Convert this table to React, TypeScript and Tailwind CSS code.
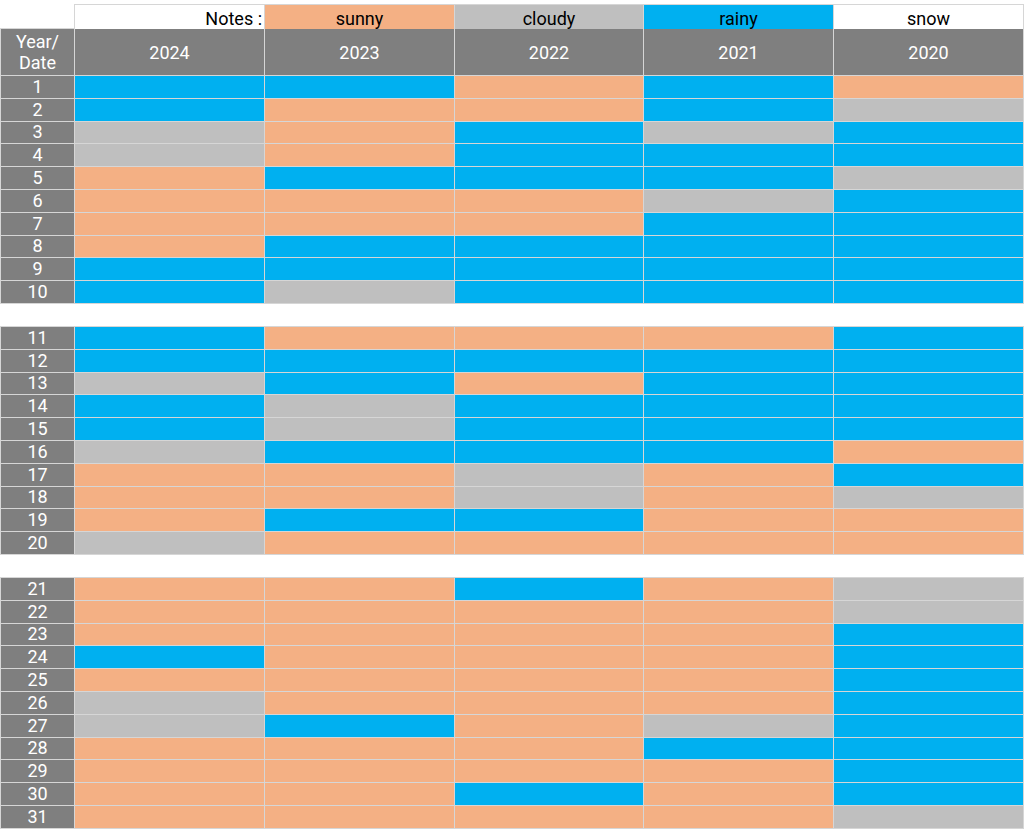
import React from 'react'

type W = 'S' | 'C' | 'R'

const bg: Record<W, string> = {
  S: 'bg-[#f4b084]',
  C: 'bg-[#bfbfbf]',
  R: 'bg-[#00b0f0]',
}

const years = ['2024', '2023', '2022', '2021', '2020']

// one string per day: 2024, 2023, 2022, 2021, 2020
const days: string[] = [
  'RRSRS', 'RSSRC', 'CSRCR', 'CSRRR', 'SRRRC',
  'SSSCR', 'SSSRR', 'SRRRR', 'RRRRR', 'RCRRR',
  'RSSSR', 'RRRRR', 'CRSRR', 'RCRRR', 'RCRRR',
  'CRRRS', 'SSCSR', 'SSCSC', 'SRRSS', 'CSSSS',
  'SSRSC', 'SSSSC', 'SSSSR', 'RSSSR', 'SSSSR',
  'CSSSR', 'CRSCR', 'SSSRR', 'SSSSR', 'SSRSR', 'SSSSC',
]

const cols = 'grid-cols-[73px_189px_189px_188px_189px_189px]'

function DayRow({ day }: { day: number }) {
  const row = days[day - 1].split('') as W[]
  return (
    <>
      <div className="bg-[#7f7f7f] text-white text-[18px] leading-none flex items-center justify-center">
        {day}
      </div>
      {row.map((w, i) => (
        <div key={i} className={bg[w]} />
      ))}
    </>
  )
}

function Section({ from, to, header }: { from: number; to: number; header?: boolean }) {
  const list = []
  for (let d = from; d <= to; d++) list.push(d)
  return (
    <div
      className={`grid ${cols} ${header ? 'grid-rows-[46px]' : ''} auto-rows-[21.8px] gap-px bg-[#d6d6d6] p-px`}
    >
      {header && (
        <>
          <div className="bg-[#7f7f7f] text-white text-[18px] leading-[21px] flex flex-col items-center justify-center">
            <span>Year/</span>
            <span>Date</span>
          </div>
          {years.map(y => (
            <div key={y} className="bg-[#7f7f7f] text-white text-[18px] flex items-center justify-center">
              {y}
            </div>
          ))}
        </>
      )}
      {list.map(d => (
        <DayRow key={d} day={d} />
      ))}
    </div>
  )
}

export default function App() {
  return (
    <div className="w-[1024px] h-[838px] bg-white pt-[4px] font-['Roboto',sans-serif] overflow-hidden">
      {/* Notes / legend */}
      <div className="ml-[74px] grid grid-cols-[189px_189px_188px_189px_189px] h-[24px] gap-px bg-[#d6d6d6] px-px pt-px text-[18px] text-black">
        <div className="bg-white flex items-center justify-end pr-[2px]">Notes :</div>
        <div className="bg-[#f4b084] flex items-center justify-center">sunny</div>
        <div className="bg-[#bfbfbf] flex items-center justify-center">cloudy</div>
        <div className="bg-[#00b0f0] flex items-center justify-center">rainy</div>
        <div className="bg-white flex items-center justify-center">snow</div>
      </div>

      <Section from={1} to={10} header />
      <div className="h-[22px]" />
      <Section from={11} to={20} />
      <div className="h-[22px]" />
      <Section from={21} to={31} />
    </div>
  )
}
